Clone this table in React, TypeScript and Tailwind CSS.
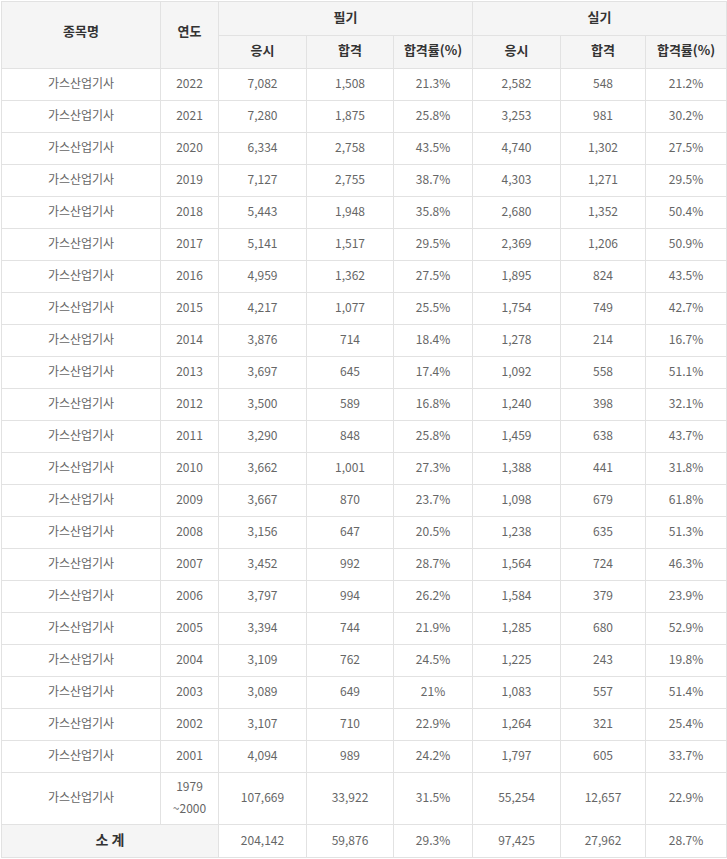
const rows: [string, string, string, string, string, string, string][] = [
  ["2022", "7,082", "1,508", "21.3%", "2,582", "548", "21.2%"],
  ["2021", "7,280", "1,875", "25.8%", "3,253", "981", "30.2%"],
  ["2020", "6,334", "2,758", "43.5%", "4,740", "1,302", "27.5%"],
  ["2019", "7,127", "2,755", "38.7%", "4,303", "1,271", "29.5%"],
  ["2018", "5,443", "1,948", "35.8%", "2,680", "1,352", "50.4%"],
  ["2017", "5,141", "1,517", "29.5%", "2,369", "1,206", "50.9%"],
  ["2016", "4,959", "1,362", "27.5%", "1,895", "824", "43.5%"],
  ["2015", "4,217", "1,077", "25.5%", "1,754", "749", "42.7%"],
  ["2014", "3,876", "714", "18.4%", "1,278", "214", "16.7%"],
  ["2013", "3,697", "645", "17.4%", "1,092", "558", "51.1%"],
  ["2012", "3,500", "589", "16.8%", "1,240", "398", "32.1%"],
  ["2011", "3,290", "848", "25.8%", "1,459", "638", "43.7%"],
  ["2010", "3,662", "1,001", "27.3%", "1,388", "441", "31.8%"],
  ["2009", "3,667", "870", "23.7%", "1,098", "679", "61.8%"],
  ["2008", "3,156", "647", "20.5%", "1,238", "635", "51.3%"],
  ["2007", "3,452", "992", "28.7%", "1,564", "724", "46.3%"],
  ["2006", "3,797", "994", "26.2%", "1,584", "379", "23.9%"],
  ["2005", "3,394", "744", "21.9%", "1,285", "680", "52.9%"],
  ["2004", "3,109", "762", "24.5%", "1,225", "243", "19.8%"],
  ["2003", "3,089", "649", "21%", "1,083", "557", "51.4%"],
  ["2002", "3,107", "710", "22.9%", "1,264", "321", "25.4%"],
  ["2001", "4,094", "989", "24.2%", "1,797", "605", "33.7%"],
];

const th = "border border-[#e2e2e2] bg-[#f5f5f5] text-[#333] text-[13px] font-bold text-center align-middle pb-[4px]";
const td = "border border-[#e2e2e2] text-[#666] text-[12px] text-center align-middle pb-[3px]";

export default function App() {
  return (
    <div className="bg-white p-px" style={{ fontFamily: '"Noto Sans CJK KR", "Noto Sans", sans-serif' }}>
      <table className="w-[725px] table-fixed border-collapse">
        <colgroup>
          <col className="w-[159px]" />
          <col className="w-[58px]" />
          <col className="w-[88px]" />
          <col className="w-[87px]" />
          <col className="w-[79px]" />
          <col className="w-[88px]" />
          <col className="w-[85px]" />
          <col className="w-[81px]" />
        </colgroup>
        <thead>
          <tr className="h-[34px]">
            <th rowSpan={2} className={`${th} pb-[8px]`}>종목명</th>
            <th rowSpan={2} className={`${th} pb-[8px]`}>연도</th>
            <th colSpan={3} className={th}>필기</th>
            <th colSpan={3} className={th}>실기</th>
          </tr>
          <tr className="h-[33px]">
            <th className={th}>응시</th>
            <th className={th}>합격</th>
            <th className={th}>합격률(%)</th>
            <th className={th}>응시</th>
            <th className={th}>합격</th>
            <th className={th}>합격률(%)</th>
          </tr>
        </thead>
        <tbody>
          {rows.map((r) => (
            <tr key={r[0]} className="h-[32px]">
              <td className={td}>가스산업기사</td>
              {r.map((v, i) => (
                <td key={i} className={td}>{v}</td>
              ))}
            </tr>
          ))}
          <tr className="h-[52px]">
            <td className={td}>가스산업기사</td>
            <td className={`${td} leading-[22px]`}>
              1979
              <br />
              ~2000
            </td>
            <td className={td}>107,669</td>
            <td className={td}>33,922</td>
            <td className={td}>31.5%</td>
            <td className={td}>55,254</td>
            <td className={td}>12,657</td>
            <td className={td}>22.9%</td>
          </tr>
          <tr className="h-[33px]">
            <td colSpan={2} className={`${th} text-[#111] text-[14px]`}>소 계</td>
            <td className={td}>204,142</td>
            <td className={td}>59,876</td>
            <td className={td}>29.3%</td>
            <td className={td}>97,425</td>
            <td className={td}>27,962</td>
            <td className={td}>28.7%</td>
          </tr>
        </tbody>
      </table>
    </div>
  );
}
